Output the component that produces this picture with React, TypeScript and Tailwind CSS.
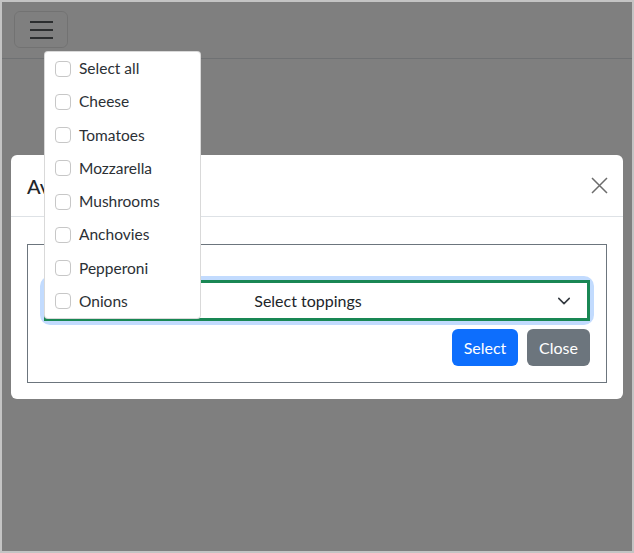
import React from "react";

const toppings = [
  "Select all",
  "Cheese",
  "Tomatoes",
  "Mozzarella",
  "Mushrooms",
  "Anchovies",
  "Pepperoni",
  "Onions",
];

const font = { fontFamily: '"Segoe UI", Lato, "Noto Sans", sans-serif' };

const App: React.FC = () => {
  return (
    <div
      className="relative h-[553px] w-[634px] overflow-hidden border-2 border-[#c4c4c4] bg-white text-[#212529]"
      style={font}
    >
      {/* navbar */}
      <div className="flex h-[57px] items-start border-b border-[#dee2e6] pl-3 pt-[9px]">
        <button className="flex h-[37px] w-[54px] flex-col items-center justify-center gap-[6px] rounded-md border border-black/10">
          <span className="block h-[2px] w-[23px] bg-[#212529]/75" />
          <span className="block h-[2px] w-[23px] bg-[#212529]/75" />
          <span className="block h-[2px] w-[23px] bg-[#212529]/75" />
        </button>
      </div>

      {/* backdrop */}
      <div className="absolute inset-0 bg-black/50" />

      {/* modal */}
      <div className="absolute left-[9px] top-[153px] w-[612px] rounded-md bg-white">
        <div className="flex h-[62px] items-center justify-between border-b border-[#dee2e6] pl-4 pr-[14px]">
          <h5 className="text-[20px] font-medium leading-normal">Available toppings</h5>
          <button className="flex h-5 w-5 items-center justify-center">
            <svg width="17" height="17" viewBox="0 0 17 17">
              <path d="M1 1L16 16M16 1L1 16" stroke="#6c6c6c" strokeWidth="1.5" />
            </svg>
          </button>
        </div>
        <div className="px-4 pb-4 pt-[27px]">
          <div className="border border-[#6c757d] px-[16px] pb-[16px] pt-[35px]">
            <div className="rounded-[6px] shadow-[0_0_0_4px_#c2dbfe]">
              <div className="flex h-[41px] items-center border-[3px] border-[#198754] pl-3 pr-[16px]">
                <span className="flex-1 text-center text-[16px]">Select toppings</span>
                <svg width="14" height="14" viewBox="0 0 16 16" fill="none">
                  <path d="M2 5l6 6 6-6" stroke="#343a40" strokeWidth="1.8" strokeLinecap="round" strokeLinejoin="round" />
                </svg>
              </div>
            </div>
            <div className="mt-[8px] flex justify-end gap-[9px]">
              <button className="h-[37px] w-[66px] rounded-md bg-[#0d6efd] text-[16px] text-white">Select</button>
              <button className="h-[37px] w-[63px] rounded-md bg-[#6c757d] text-[16px] text-white">Close</button>
            </div>
          </div>
        </div>
      </div>

      {/* dropdown menu */}
      <div className="absolute left-[42px] top-[49px] w-[157px] rounded-[4px] border border-black/15 bg-white">
        {toppings.map((t) => (
          <label key={t} className="flex h-[33.25px] items-center gap-2 pl-[10px] text-[15.5px] text-[#2b3035]">
            <span className="block h-4 w-4 rounded-[4px] border border-[#c7c7c7] bg-white" />
            <span>{t}</span>
          </label>
        ))}
      </div>
    </div>
  );
};

export default App;
